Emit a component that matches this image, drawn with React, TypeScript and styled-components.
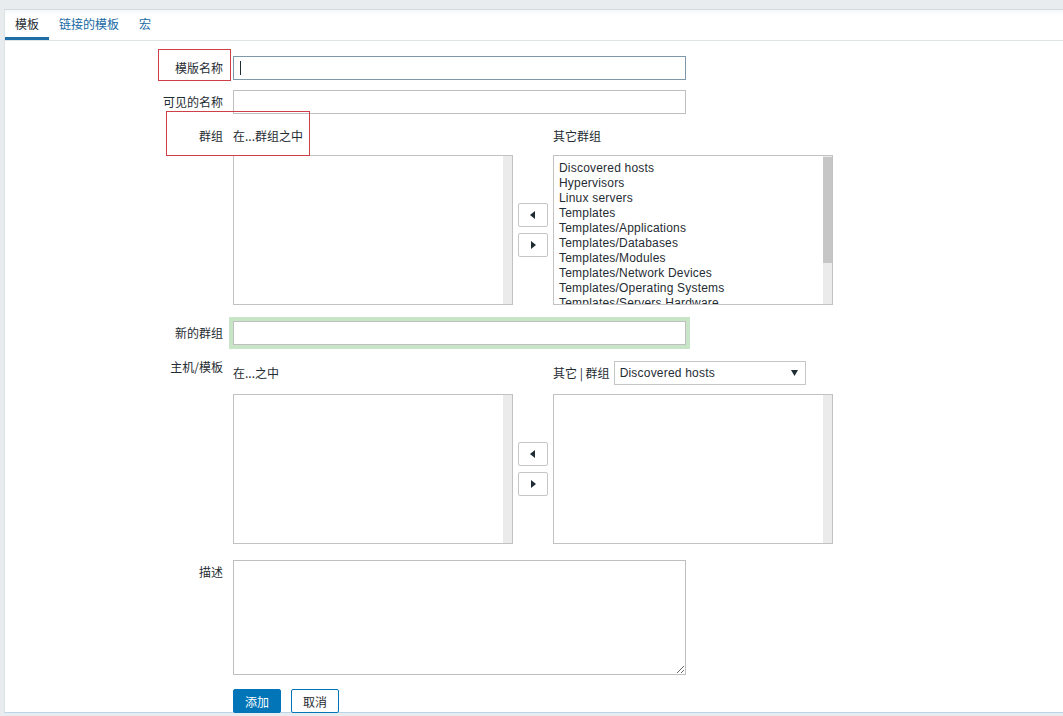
import React from "react";
import styled, { createGlobalStyle } from "styled-components";

const GlobalStyle = createGlobalStyle`
  html, body { margin: 0; padding: 0; }
  body {
    background: #e9ecee;
    font-family: "Liberation Sans", "Noto Sans CJK SC", Arial, sans-serif;
    font-size: 12px;
    color: #1f2c33;
  }
`;

const Page = styled.div`
  width: 1063px;
  height: 716px;
  padding: 9px 0 0 4px;
  box-sizing: border-box;
  overflow: hidden;
`;

const Panel = styled.div`
  background: #fff;
  border-top: 1px solid #d3dade;
  border-left: 1px solid #dde2e5;
  border-bottom: 1px solid #bcd4e8;
  height: 704px;
  box-sizing: border-box;
`;

const TabBar = styled.div`
  display: flex;
  height: 31px;
  box-sizing: border-box;
  border-bottom: 1px solid #dfe4e7;
  background: linear-gradient(#f4f8fa 0, #fff 5px);
`;

const Tab = styled.div<{ $active?: boolean }>`
  padding: 0 10px;
  height: 30px;
  line-height: 27px;
  box-sizing: border-box;
  border-bottom: 3px solid ${(p) => (p.$active ? "#1f6ea8" : "transparent")};
  color: ${(p) => (p.$active ? "#1f2c33" : "#1769a5")};
  font-family: "Noto Sans CJK SC", sans-serif;
  font-size: 12px;
`;

const Form = styled.div`
  padding-top: 15px;
  display: flex;
  flex-direction: column;
`;

const Row = styled.div<{ $mb: number }>`
  position: relative;
  display: grid;
  grid-template-columns: 218px 1fr;
  column-gap: 10px;
  margin-bottom: ${(p) => p.$mb}px;
`;

const Label = styled.div<{ $pt?: number }>`
  text-align: right;
  line-height: 24px;
  padding-top: ${(p) => p.$pt ?? 0}px;
  font-family: "Noto Sans CJK SC", sans-serif;
  font-size: 12px;
  color: #1f2c33;
`;

const TextBox = styled.div<{ $focused?: boolean; $w?: number }>`
  width: ${(p) => p.$w ?? 453}px;
  height: 24px;
  box-sizing: border-box;
  border: 1px solid ${(p) => (p.$focused ? "#7d98ab" : "#bfbfbf")};
  background: #fff;
  display: flex;
  align-items: center;
  padding-left: 6px;
`;

const Caret = styled.span`
  width: 1px;
  height: 14px;
  background: #1f2c33;
`;

const GlowWrap = styled.div`
  width: max-content;
  margin-left: -4px;
  border: 4px solid #c8e6c7;
`;

const Annotation = styled.div<{ $l: number; $t: number; $w: number; $h: number }>`
  position: absolute;
  left: ${(p) => p.$l}px;
  top: ${(p) => p.$t}px;
  width: ${(p) => p.$w}px;
  height: ${(p) => p.$h}px;
  border: 1px solid #cf3f48;
  box-sizing: border-box;
  pointer-events: none;
`;

const Twin = styled.div`
  display: flex;
  flex-direction: column;
`;

const TwinHeader = styled.div<{ $pt: number; $mb: number }>`
  display: grid;
  grid-template-columns: 280px 40px 280px;
  align-items: center;
  padding-top: ${(p) => p.$pt}px;
  margin-bottom: ${(p) => p.$mb}px;
  height: 24px;
`;

const HeadText = styled.div`
  line-height: 24px;
  font-family: "Noto Sans CJK SC", sans-serif;
  font-size: 12px;
  display: flex;
  align-items: center;
  gap: 4px;
`;

const TwinBody = styled.div`
  display: grid;
  grid-template-columns: 280px 40px 280px;
`;

const ListBox = styled.div`
  height: 150px;
  box-sizing: border-box;
  border: 1px solid #c2c2c2;
  display: flex;
  background: #fff;
`;

const ListContent = styled.div`
  flex: 1;
  overflow: hidden;
  padding: 5px 0 0 5px;
`;

const ListItem = styled.div`
  line-height: 15px;
  white-space: nowrap;
  font-family: "Liberation Sans", Arial, sans-serif;
  font-size: 12px;
  letter-spacing: 0.2px;
  color: #1f2c33;
`;

const ScrollTrack = styled.div`
  width: 9px;
  background: #ebebeb;
  display: flex;
  flex-direction: column;
`;

const ScrollThumb = styled.div<{ $h: number }>`
  height: ${(p) => p.$h}px;
  margin-top: 1px;
  background: #c6c6c6;
`;

const MoveCol = styled.div`
  display: flex;
  flex-direction: column;
  align-items: center;
  justify-content: center;
  gap: 6px;
`;

const MoveButton = styled.div`
  width: 30px;
  height: 24px;
  box-sizing: border-box;
  border: 1px solid #c6c6c6;
  border-radius: 2px;
  background: #fff;
  display: flex;
  align-items: center;
  justify-content: center;
`;

const Select = styled.div`
  width: 192px;
  height: 24px;
  box-sizing: border-box;
  border: 1px solid #c6c6c6;
  display: flex;
  align-items: center;
  justify-content: space-between;
  padding: 0 7px 0 5px;
  font-family: "Liberation Sans", Arial, sans-serif;
  font-size: 12px;
  letter-spacing: 0.2px;
  color: #1f2c33;
`;

const TextArea = styled.textarea`
  width: 453px;
  height: 115px;
  box-sizing: border-box;
  border: 1px solid #bfbfbf;
  margin: 0;
  padding: 4px;
  display: block;
  resize: both;
  font-family: "Liberation Sans", Arial, sans-serif;
  font-size: 12px;
  outline: none;
`;

const Buttons = styled.div`
  display: flex;
  gap: 10px;
`;

const Btn = styled.div<{ $primary?: boolean }>`
  width: 48px;
  height: 24px;
  box-sizing: border-box;
  border-radius: 2px;
  border: 1px solid #0275b8;
  background: ${(p) => (p.$primary ? "#0275b8" : "#fff")};
  color: ${(p) => (p.$primary ? "#fff" : "#1f2c33")};
  display: flex;
  align-items: center;
  justify-content: center;
  font-family: "Noto Sans CJK SC", sans-serif;
  font-size: 12px;
`;

const Arrow = ({ dir }: { dir: "left" | "right" }) => (
  <svg width="6" height="8" viewBox="0 0 6 8">
    {dir === "left" ? (
      <polygon points="5,0 5,8 0,4" fill="#1f2c33" />
    ) : (
      <polygon points="1,0 1,8 6,4" fill="#1f2c33" />
    )}
  </svg>
);

const Down = () => (
  <svg width="7" height="6" viewBox="0 0 7 6">
    <polygon points="0,0 7,0 3.5,6" fill="#1f2c33" />
  </svg>
);

const groups = [
  "Discovered hosts",
  "Hypervisors",
  "Linux servers",
  "Templates",
  "Templates/Applications",
  "Templates/Databases",
  "Templates/Modules",
  "Templates/Network Devices",
  "Templates/Operating Systems",
  "Templates/Servers Hardware",
];

const MoveButtons = () => (
  <MoveCol>
    <MoveButton>
      <Arrow dir="left" />
    </MoveButton>
    <MoveButton>
      <Arrow dir="right" />
    </MoveButton>
  </MoveCol>
);

export default function App() {
  return (
    <>
      <GlobalStyle />
      <Page>
        <Panel>
          <TabBar>
            <Tab $active>模板</Tab>
            <Tab>链接的模板</Tab>
            <Tab>宏</Tab>
          </TabBar>
          <Form>
            <Row $mb={10}>
              <Label>模版名称</Label>
              <TextBox $focused>
                <Caret />
              </TextBox>
              <Annotation $l={153} $t={-7} $w={73} $h={32} />
            </Row>
            <Row $mb={10}>
              <Label>可见的名称</Label>
              <TextBox />
            </Row>
            <Row $mb={12}>
              <Label>群组</Label>
              <Twin>
                <TwinHeader $pt={0} $mb={7}>
                  <HeadText>在...群组之中</HeadText>
                  <div />
                  <HeadText>其它群组</HeadText>
                </TwinHeader>
                <TwinBody>
                  <ListBox>
                    <ListContent />
                    <ScrollTrack />
                  </ListBox>
                  <MoveButtons />
                  <ListBox>
                    <ListContent>
                      {groups.map((g) => (
                        <ListItem key={g}>{g}</ListItem>
                      ))}
                    </ListContent>
                    <ScrollTrack>
                      <ScrollThumb $h={106} />
                    </ScrollTrack>
                  </ListBox>
                </TwinBody>
              </Twin>
              <Annotation $l={161} $t={-13} $w={144} $h={45} />
            </Row>
            <Row $mb={6}>
              <Label $pt={4}>新的群组</Label>
              <GlowWrap>
                <TextBox />
              </GlowWrap>
            </Row>
            <Row $mb={16}>
              <Label>主机/模板</Label>
              <Twin>
                <TwinHeader $pt={6} $mb={9}>
                  <HeadText>在...之中</HeadText>
                  <div />
                  <HeadText>
                    其它 | 群组
                    <Select>
                      Discovered hosts
                      <Down />
                    </Select>
                  </HeadText>
                </TwinHeader>
                <TwinBody>
                  <ListBox>
                    <ListContent />
                    <ScrollTrack />
                  </ListBox>
                  <MoveButtons />
                  <ListBox>
                    <ListContent />
                    <ScrollTrack />
                  </ListBox>
                </TwinBody>
              </Twin>
            </Row>
            <Row $mb={14}>
              <Label>描述</Label>
              <TextArea />
            </Row>
            <Row $mb={0}>
              <div />
              <Buttons>
                <Btn $primary>添加</Btn>
                <Btn>取消</Btn>
              </Buttons>
            </Row>
          </Form>
        </Panel>
      </Page>
    </>
  );
}
